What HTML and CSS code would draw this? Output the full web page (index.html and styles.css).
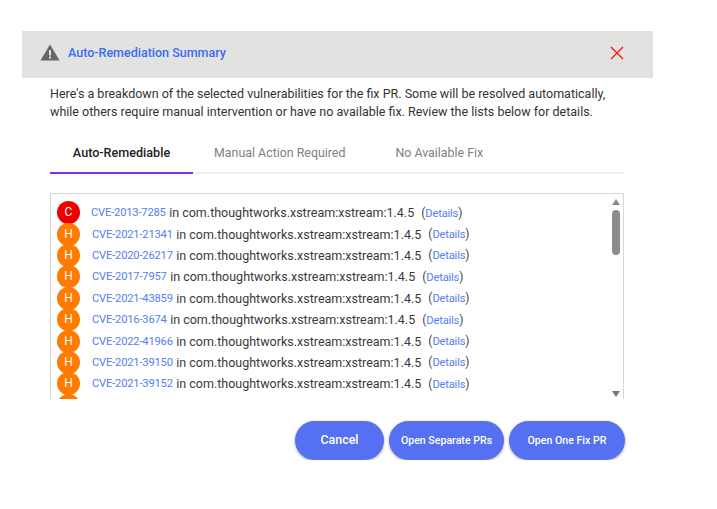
FILE: index.html
```html
<!DOCTYPE html>
<html lang="en">
<head>
    <meta charset="UTF-8">
    <title>Auto-Remediation Summary</title>
    <link rel="stylesheet" href="styles.css">
</head>
<body>
    <div class="dialog">
        <div class="header">
            <svg class="warnIcon" width="20" height="17" viewBox="0 0 20 17">
                <path d="M10 0.5 L19.6 16.5 H0.4 Z" fill="#666"/>
                <rect x="9" y="6" width="2" height="5.5" fill="#e2e2e2"/>
                <rect x="9" y="12.5" width="2" height="2" fill="#e2e2e2"/>
            </svg>
            <span class="title">Auto-Remediation Summary</span>
            <svg class="closeIcon" width="14" height="14" viewBox="0 0 14 14">
                <path d="M1 1 L13 13 M13 1 L1 13" stroke="#f5281c" stroke-width="1.5" fill="none"/>
            </svg>
        </div>
        <div class="content">
            <p class="intro">Here's a breakdown of the selected vulnerabilities for the fix PR. Some will be resolved automatically, while others require manual intervention or have no available fix. Review the lists below for details.</p>
            <div class="tabs">
                <div class="tab tab-active">Auto-Remediable</div>
                <div class="tab tab-manual">Manual Action Required</div>
                <div class="tab tab-none">No Available Fix</div>
            </div>
            <div class="listBox">
                <ul class="list">
                    <li class="row"><span class="badge badge-c">C</span><a class="cve">CVE-2013-7285</a><span class="pkg">in com.thoughtworks.xstream:xstream:1.4.5</span><span class="paren">(<a class="details">Details</a>)</span></li>
                    <li class="row"><span class="badge">H</span><a class="cve">CVE-2021-21341</a><span class="pkg">in com.thoughtworks.xstream:xstream:1.4.5</span><span class="paren">(<a class="details">Details</a>)</span></li>
                    <li class="row"><span class="badge">H</span><a class="cve">CVE-2020-26217</a><span class="pkg">in com.thoughtworks.xstream:xstream:1.4.5</span><span class="paren">(<a class="details">Details</a>)</span></li>
                    <li class="row"><span class="badge">H</span><a class="cve">CVE-2017-7957</a><span class="pkg">in com.thoughtworks.xstream:xstream:1.4.5</span><span class="paren">(<a class="details">Details</a>)</span></li>
                    <li class="row"><span class="badge">H</span><a class="cve">CVE-2021-43859</a><span class="pkg">in com.thoughtworks.xstream:xstream:1.4.5</span><span class="paren">(<a class="details">Details</a>)</span></li>
                    <li class="row"><span class="badge">H</span><a class="cve">CVE-2016-3674</a><span class="pkg">in com.thoughtworks.xstream:xstream:1.4.5</span><span class="paren">(<a class="details">Details</a>)</span></li>
                    <li class="row"><span class="badge">H</span><a class="cve">CVE-2022-41966</a><span class="pkg">in com.thoughtworks.xstream:xstream:1.4.5</span><span class="paren">(<a class="details">Details</a>)</span></li>
                    <li class="row"><span class="badge">H</span><a class="cve">CVE-2021-39150</a><span class="pkg">in com.thoughtworks.xstream:xstream:1.4.5</span><span class="paren">(<a class="details">Details</a>)</span></li>
                    <li class="row"><span class="badge">H</span><a class="cve">CVE-2021-39152</a><span class="pkg">in com.thoughtworks.xstream:xstream:1.4.5</span><span class="paren">(<a class="details">Details</a>)</span></li>
                    <li class="row"><span class="badge"></span></li>
                </ul>
                <div class="scrollbar">
                    <span class="arrow arrow-up"></span>
                    <span class="thumb"></span>
                    <span class="arrow arrow-down"></span>
                </div>
            </div>
            <div class="actions">
                <button class="btn btn-cancel">Cancel</button>
                <button class="btn btn-separate">Open Separate PRs</button>
                <button class="btn btn-one">Open One Fix PR</button>
            </div>
        </div>
    </div>
</body>
</html>
```

FILE: styles.css
```css
html {
    font-family: Roboto, "Liberation Sans", sans-serif;
}
body {
    margin: 0;
    background-color: #fff;
}
.dialog {
    width: 631px;
    margin: 31px 0 0 22px;
}
.header {
    display: flex;
    align-items: center;
    box-sizing: border-box;
    height: 47px;
    padding: 0 29px 4px 18px;
    background-color: #e2e2e1;
}
.warnIcon {
    margin-right: 8px;
}
.title {
    flex: 1;
    font-size: 12.5px;
    font-weight: 500;
    color: #3b6cf6;
}
.content {
    padding: 7px 29px 0 28px;
}
.intro {
    margin: 0;
    font-size: 12.5px;
    line-height: 18px;
    color: #333;
}
.tabs {
    display: flex;
    height: 46px;
    margin-top: 5px;
    border-bottom: 2px solid #f1f1f1;
}
.tab {
    padding-top: 18px;
    font-size: 12.4px;
    line-height: 18px;
    color: #7f7f7f;
}
.tab-active {
    box-sizing: border-box;
    width: 143px;
    height: 48px;
    border-bottom: 2px solid #8a2be2;
    text-align: center;
    font-size: 12.6px;
    font-weight: 500;
    color: #222;
}
.tab-manual {
    margin-left: 21px;
}
.tab-none {
    margin-left: 50px;
}
.listBox {
    position: relative;
    height: 205px;
    margin-top: 19px;
    border: 1px solid #d8d8d8;
    border-bottom: 0;
    overflow: hidden;
}
.list {
    margin: 0;
    padding: 8px 0 0 6px;
    list-style: none;
}
.row {
    display: flex;
    align-items: center;
    height: 21.4px;
    white-space: pre;
}
.badge {
    flex: none;
    width: 23px;
    height: 23px;
    margin-right: 12px;
    border-radius: 50%;
    background-color: #ff7b00;
    color: #fff;
    font-size: 12px;
    line-height: 23px;
    text-align: center;
}
.badge-c {
    margin-right: 11px;
    background-color: #ee0000;
}
.cve,
.details {
    font-size: 11.2px;
    letter-spacing: -0.2px;
    color: #5580f0;
}
.pkg {
    margin-left: 3.5px;
    font-size: 12.5px;
    color: #3a3a3a;
}
.paren {
    margin-left: 7px;
    font-size: 12px;
    color: #444;
}
.scrollbar {
    position: absolute;
    top: 0;
    right: 0;
    bottom: 0;
    display: flex;
    flex-direction: column;
    align-items: center;
    width: 14px;
}
.arrow {
    width: 0;
    height: 0;
    border-left: 4px solid transparent;
    border-right: 4px solid transparent;
}
.arrow-up {
    margin-top: 5px;
    border-bottom: 6px solid #8a8a8a;
}
.arrow-down {
    margin-top: auto;
    margin-bottom: 2px;
    border-top: 6px solid #777;
}
.thumb {
    width: 8px;
    height: 45px;
    margin-top: 5px;
    border-radius: 4px;
    background-color: #8c8c8c;
}
.actions {
    display: flex;
    justify-content: flex-end;
    gap: 5px;
    margin-top: 22px;
    margin-right: -1px;
}
.btn {
    height: 39px;
    border: 0;
    border-radius: 20px;
    background-color: #5570f1;
    box-shadow: 0 1px 3px rgba(0, 0, 0, 0.35);
    color: #fff;
    font-family: inherit;
    font-weight: 500;
    font-size: 10.6px;
}
.btn-cancel {
    width: 89px;
    font-size: 12.4px;
    padding-bottom: 3px;
}
.btn-separate {
    width: 115px;
    padding-left: 6px;
}
.btn-one {
    width: 116px;
}
```
